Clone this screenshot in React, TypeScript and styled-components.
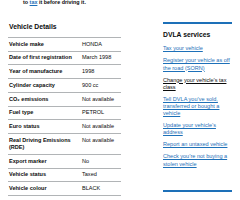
import styled, { createGlobalStyle } from "styled-components";

const GlobalStyle = createGlobalStyle`
  html, body {
    margin: 0;
    padding: 0;
    background: #ffffff;
    overflow: hidden;
  }
  body {
    font-family: "Liberation Sans", Arial, sans-serif;
    color: #0b0c0c;
    -webkit-font-smoothing: antialiased;
  }
`;

const Page = styled.div`
  display: grid;
  grid-template-columns: 113px 69px;
  column-gap: 42px;
  padding-left: 8px;
  width: 240px;
  height: 200px;
  box-sizing: border-box;
  overflow: hidden;
`;

const Main = styled.div`
  display: flex;
  flex-direction: column;
`;

const Intro = styled.p`
  margin: -1px 0 0;
  padding-left: 15px;
  font-size: 5.4px;
  line-height: 7px;
  font-weight: 700;
  white-space: nowrap;
`;

const InlineLink = styled.a`
  color: #1d70b8;
  text-decoration: underline;
`;

const Heading = styled.h2`
  margin: 17px 0 6px 1px;
  font-size: 6.8px;
  line-height: 8px;
  font-weight: 700;
`;

const SummaryList = styled.dl`
  margin: 0;
  border-top: 1px solid #b1b4b6;
`;

const Row = styled.div`
  display: grid;
  grid-template-columns: 73px 1fr;
  padding: 2.75px 0 2.75px 1px;
  border-bottom: 1px solid #b1b4b6;
  font-size: 5.56px;
  line-height: 7.2px;
`;

const Key = styled.dt`
  margin: 0;
  padding-right: 6px;
  font-weight: 700;
`;

const Value = styled.dd`
  margin: 0;
`;

const Aside = styled.aside`
  display: flex;
  flex-direction: column;
`;

const Section = styled.div<{ $first?: boolean }>`
  margin-top: ${(p) => (p.$first ? "22px" : "17.7px")};
  border-top: 2.3px solid #1d70b8;
`;

const SideHeading = styled.h3`
  margin: 7px 0 6.3px;
  font-size: 6.8px;
  line-height: 8px;
  font-weight: 700;
  white-space: nowrap;
`;

const LinkList = styled.ul`
  list-style: none;
  margin: 0;
  padding: 0;
`;

const Item = styled.li`
  margin-bottom: 4.8px;
  font-size: 5.56px;
  line-height: 7.2px;
`;

const SideLink = styled.a<{ $hover?: boolean }>`
  color: ${(p) => (p.$hover ? "#0b0c0c" : "#1d70b8")};
  text-decoration: underline;
  text-decoration-thickness: ${(p) => (p.$hover ? "1px" : "0.5px")};
  text-underline-offset: 1px;
`;

const details: [string, string][] = [
  ["Vehicle make", "HONDA"],
  ["Date of first registration", "March 1998"],
  ["Year of manufacture", "1998"],
  ["Cylinder capacity", "900 cc"],
  ["CO\u2082 emissions", "Not available"],
  ["Fuel type", "PETROL"],
  ["Euro status", "Not available"],
  ["Real Driving Emissions (RDE)", "Not available"],
  ["Export marker", "No"],
  ["Vehicle status", "Taxed"],
  ["Vehicle colour", "BLACK"],
];

const dvlaLinks = [
  "Tax your vehicle",
  "Register your vehicle as off the road (SORN)",
  "Change your vehicle\u2019s tax class",
  "Tell DVLA you\u2019ve sold, transferred or bought a vehicle",
  "Update your vehicle\u2019s address",
  "Report an untaxed vehicle",
  "Check you\u2019re not buying a stolen vehicle",
];

const App = () => {
  return (
    <>
      <GlobalStyle />
      <Page>
        <Main>
          <Intro>
            to <InlineLink href="#">tax</InlineLink> it before driving it.
          </Intro>
          <Heading>Vehicle Details</Heading>
          <SummaryList>
            {details.map(([key, value]) => (
              <Row key={key}>
                <Key>{key}</Key>
                <Value>{value}</Value>
              </Row>
            ))}
          </SummaryList>
        </Main>
        <Aside>
          <Section $first>
            <SideHeading>DVLA services</SideHeading>
            <LinkList>
              {dvlaLinks.map((text, i) => (
                <Item key={text}>
                  <SideLink href="#" $hover={i === 2}>
                    {text}
                  </SideLink>
                </Item>
              ))}
            </LinkList>
          </Section>
          <Section>
            <SideHeading>DVSA services</SideHeading>
          </Section>
        </Aside>
      </Page>
    </>
  );
};

export default App;
